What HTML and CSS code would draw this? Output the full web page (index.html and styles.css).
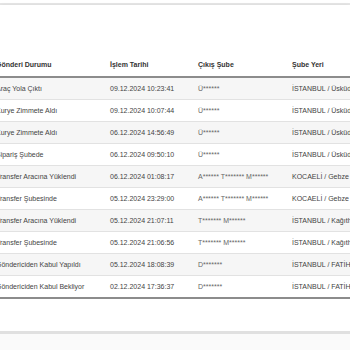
FILE: index.html
```html
<!DOCTYPE html>
<html lang="tr">
<head>
  <meta charset="UTF-8">
  <title>Gönderi Hareketleri</title>
  <link rel="stylesheet" href="styles.css">
</head>
<body>
  <div class="top-edge"></div>
  <div class="panel">
    <table class="moves">
      <thead>
        <tr><th class="c1">Gönderi Durumu</th><th class="c2">İşlem Tarihi</th><th class="c3">Çıkış Şube</th><th class="c4">Şube Yeri</th></tr>
      </thead>
      <tbody>
        <tr><td>Araç Yola Çıktı</td><td>09.12.2024 10:23:41</td><td class="mask">Ü******</td><td>İSTANBUL / Üsküdar</td></tr>
        <tr><td>Kurye Zimmete Aldı</td><td>09.12.2024 10:07:44</td><td class="mask">Ü******</td><td>İSTANBUL / Üsküdar</td></tr>
        <tr><td>Kurye Zimmete Aldı</td><td>06.12.2024 14:56:49</td><td class="mask">Ü******</td><td>İSTANBUL / Üsküdar</td></tr>
        <tr><td>Sipariş Şubede</td><td>06.12.2024 09:50:10</td><td class="mask">Ü******</td><td>İSTANBUL / Üsküdar</td></tr>
        <tr><td>Transfer Aracına Yüklendi</td><td>06.12.2024 01:08:17</td><td class="mask">A****** T******* M******</td><td>KOCAELİ / Gebze</td></tr>
        <tr><td>Transfer Şubesinde</td><td>05.12.2024 23:29:00</td><td class="mask">A****** T******* M******</td><td>KOCAELİ / Gebze</td></tr>
        <tr><td>Transfer Aracına Yüklendi</td><td>05.12.2024 21:07:11</td><td class="mask">T******* M******</td><td>İSTANBUL / Kağıthane</td></tr>
        <tr><td>Transfer Şubesinde</td><td>05.12.2024 21:06:56</td><td class="mask">T******* M******</td><td>İSTANBUL / Kağıthane</td></tr>
        <tr><td>Göndericiden Kabul Yapıldı</td><td>05.12.2024 18:08:39</td><td class="mask">D*******</td><td>İSTANBUL / FATİH</td></tr>
        <tr><td>Göndericiden Kabul Bekliyor</td><td>02.12.2024 17:36:37</td><td class="mask">D*******</td><td>İSTANBUL / FATİH</td></tr>
      </tbody>
    </table>
  </div>
</body>
</html>
```

FILE: styles.css
```css
body {
  margin: 0;
  background: #fafafa;
  font-family: "Liberation Sans", Arial, sans-serif;
  color: #444;
  overflow: hidden;
}
.top-edge {
  height: 3px;
  background: #fff;
  border-bottom: 2px solid #e6e6e6;
}
.panel {
  background: #fff;
  height: 329px;
  padding-top: 47px;
  box-sizing: border-box;
  border-bottom: 3px solid #e0e0e0;
  box-shadow: 0 1px 4px rgba(0,0,0,0.1);
  overflow: hidden;
}
.moves {
  border-collapse: collapse;
  margin-left: -12px;
  width: 420px;
  table-layout: fixed;
  font-size: 7px;
}
.moves th, .moves td {
  padding: 0 0 0 8px;
  text-align: left;
  white-space: nowrap;
  overflow: hidden;
}
.moves th {
  height: 24px;
  font-weight: bold;
  color: #333;
  border-bottom: 2px solid #8c8c8c;
}
.moves td {
  height: 21px;
  border-bottom: 1px solid #e2e2e2;
}
.moves tbody tr:nth-child(odd) td {
  background: #f6f6f6;
}
.moves tbody tr:last-child td {
  border-bottom: 2px solid #8c8c8c;
}
.c1 { width: 106px; }
.c2 { width: 80px; }
.c3 { width: 86px; }
.c4 { width: 140px; }
.mask {
  color: #666;
}
```
